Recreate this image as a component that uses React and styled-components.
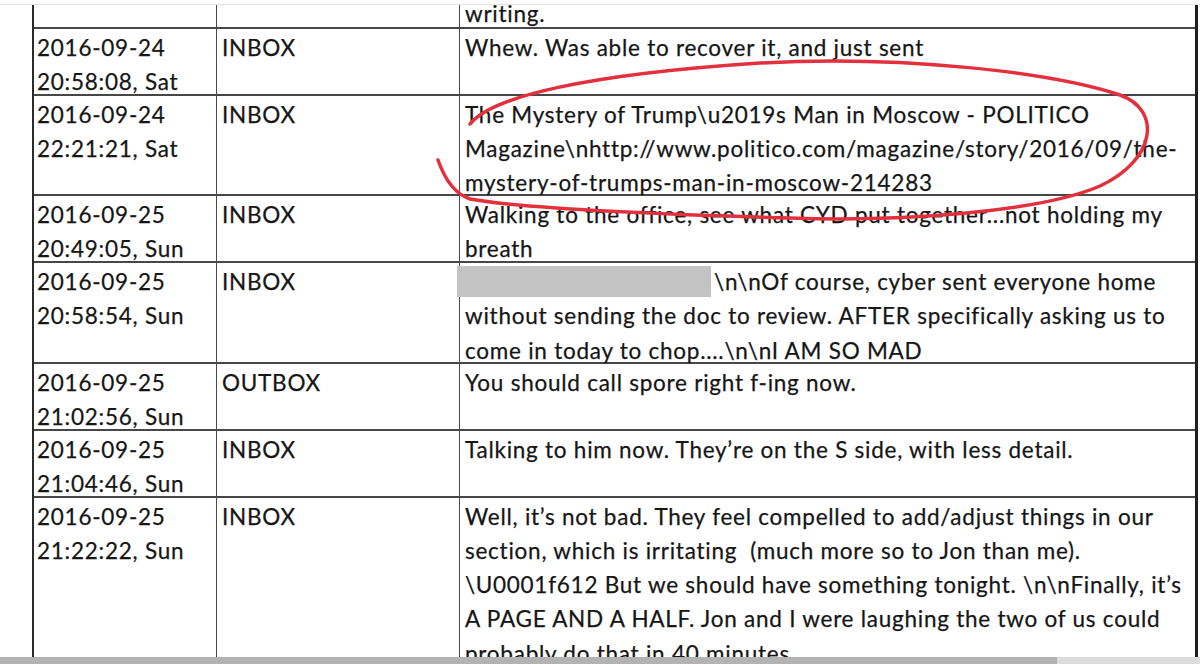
import React from "react";
import styled, { createGlobalStyle } from "styled-components";

const LINE = 33.5;

const GlobalStyle = createGlobalStyle`
  html, body {
    margin: 0;
    padding: 0;
    background: #fff;
  }
  body {
    font-family: Lato, "Open Sans", sans-serif;
  }
`;

const Page = styled.div`
  width: 1200px;
  height: 664px;
  display: flex;
  flex-direction: column;
  overflow: hidden;
  background: #fff;
`;

const TopEdge = styled.div`
  flex: none;
  height: 4px;
  border-bottom: 1px solid #e3e3e3;
`;

const Scan = styled.div`
  flex: 1;
  position: relative;
  overflow: hidden;
`;

const Sheet = styled.div`
  margin: -10px 0 0 32px;
  width: 1166px;
  box-sizing: border-box;
  border-left: 2px solid #2b2b2b;
  border-right: 3px solid #1f1f1f;
  color: #161616;
  font-size: 22.5px;
  line-height: 34.3px;
  letter-spacing: 0.75px;
  -webkit-text-stroke: 0.25px #161616;
`;

const Row = styled.div`
  display: grid;
  grid-template-columns: 182px 243px 1fr;
  height: ${(p) => p.$lines * LINE}px;
  box-sizing: border-box;
  border-bottom: 2px solid #474747;
`;

const Cell = styled.div`
  padding: 2px 0 0 5px;
  border-left: 1px solid #4a4a4a;
  white-space: nowrap;

  &:first-child {
    padding-left: 3px;
    border-left: none;
  }
`;

const Line = styled.div``;

const Redacted = styled.span`
  display: inline-block;
  vertical-align: top;
  width: 254px;
  height: 31px;
  margin: 1px 3px 0 -8px;
  background: #c3c3c3;
`;

const Ink = styled.svg`
  position: absolute;
  top: -5px;
  left: 0;
  pointer-events: none;
`;

const ScrollTrack = styled.div`
  flex: none;
  height: 7px;
  display: flex;
  background: #dcdcdc;
`;

const ScrollThumb = styled.div`
  width: ${(p) => p.$size}px;
  background: #b3b3b3;
`;

const rows = [
  { lines: 1, date: "", time: "", box: "", body: ["writing."] },
  {
    lines: 2,
    date: "2016-09-24",
    time: "20:58:08, Sat",
    box: "INBOX",
    body: ["Whew. Was able to recover it, and just sent"],
  },
  {
    lines: 3,
    date: "2016-09-24",
    time: "22:21:21, Sat",
    box: "INBOX",
    body: [
      String.raw`The Mystery of Trump\u2019s Man in Moscow - POLITICO`,
      String.raw`Magazine\nhttp://www.politico.com/magazine/story/2016/09/the-`,
      "mystery-of-trumps-man-in-moscow-214283",
    ],
  },
  {
    lines: 2,
    date: "2016-09-25",
    time: "20:49:05, Sun",
    box: "INBOX",
    body: ["Walking to the office, see what CYD put together...not holding my", "breath"],
  },
  {
    lines: 3,
    date: "2016-09-25",
    time: "20:58:54, Sun",
    box: "INBOX",
    redacted: true,
    body: [
      String.raw`\n\nOf course, cyber sent everyone home`,
      "without sending the doc to review. AFTER specifically asking us to",
      String.raw`come in today to chop....\n\nI AM SO MAD`,
    ],
  },
  {
    lines: 2,
    date: "2016-09-25",
    time: "21:02:56, Sun",
    box: "OUTBOX",
    body: ["You should call spore right f-ing now."],
  },
  {
    lines: 2,
    date: "2016-09-25",
    time: "21:04:46, Sun",
    box: "INBOX",
    body: ["Talking to him now. They\u2019re on the S side, with less detail."],
  },
  {
    lines: 6,
    date: "2016-09-25",
    time: "21:22:22, Sun",
    box: "INBOX",
    body: [
      "Well, it\u2019s not bad. They feel compelled to add/adjust things in our",
      "section, which is irritating\u00a0 (much more so to Jon than me).",
      String.raw`\U0001f612 But we should have something tonight. \n\nFinally, it’s`,
      "A PAGE AND A HALF. Jon and I were laughing the two of us could",
      "probably do that in 40 minutes...",
    ],
  },
];

const App = () => {
  return (
    <Page>
      <GlobalStyle />
      <TopEdge />
      <Scan>
        <Sheet>
          {rows.map((r, i) => (
            <Row key={i} $lines={r.lines}>
              <Cell>
                <Line>{r.date}</Line>
                <Line>{r.time}</Line>
              </Cell>
              <Cell>{r.box}</Cell>
              <Cell>
                {r.body.map((text, j) => (
                  <Line key={j}>
                    {r.redacted && j === 0 && <Redacted />}
                    {text}
                  </Line>
                ))}
              </Cell>
            </Row>
          ))}
        </Sheet>
        <Ink width="1200" height="664" viewBox="0 0 1200 664">
          <path
            d="M 470 124 C 492 96, 590 74, 760 63 C 900 55, 1050 72, 1120 95 C 1162 110, 1156 160, 1100 186 C 1040 212, 900 222, 790 218 C 650 214, 520 208, 470 199 C 455 194, 445 180, 438 160"
            fill="none"
            stroke="#e2313d"
            strokeWidth="3.5"
            strokeLinecap="round"
          />
        </Ink>
      </Scan>
      <ScrollTrack>
        <ScrollThumb $size={1057} />
      </ScrollTrack>
    </Page>
  );
};

export default App;
